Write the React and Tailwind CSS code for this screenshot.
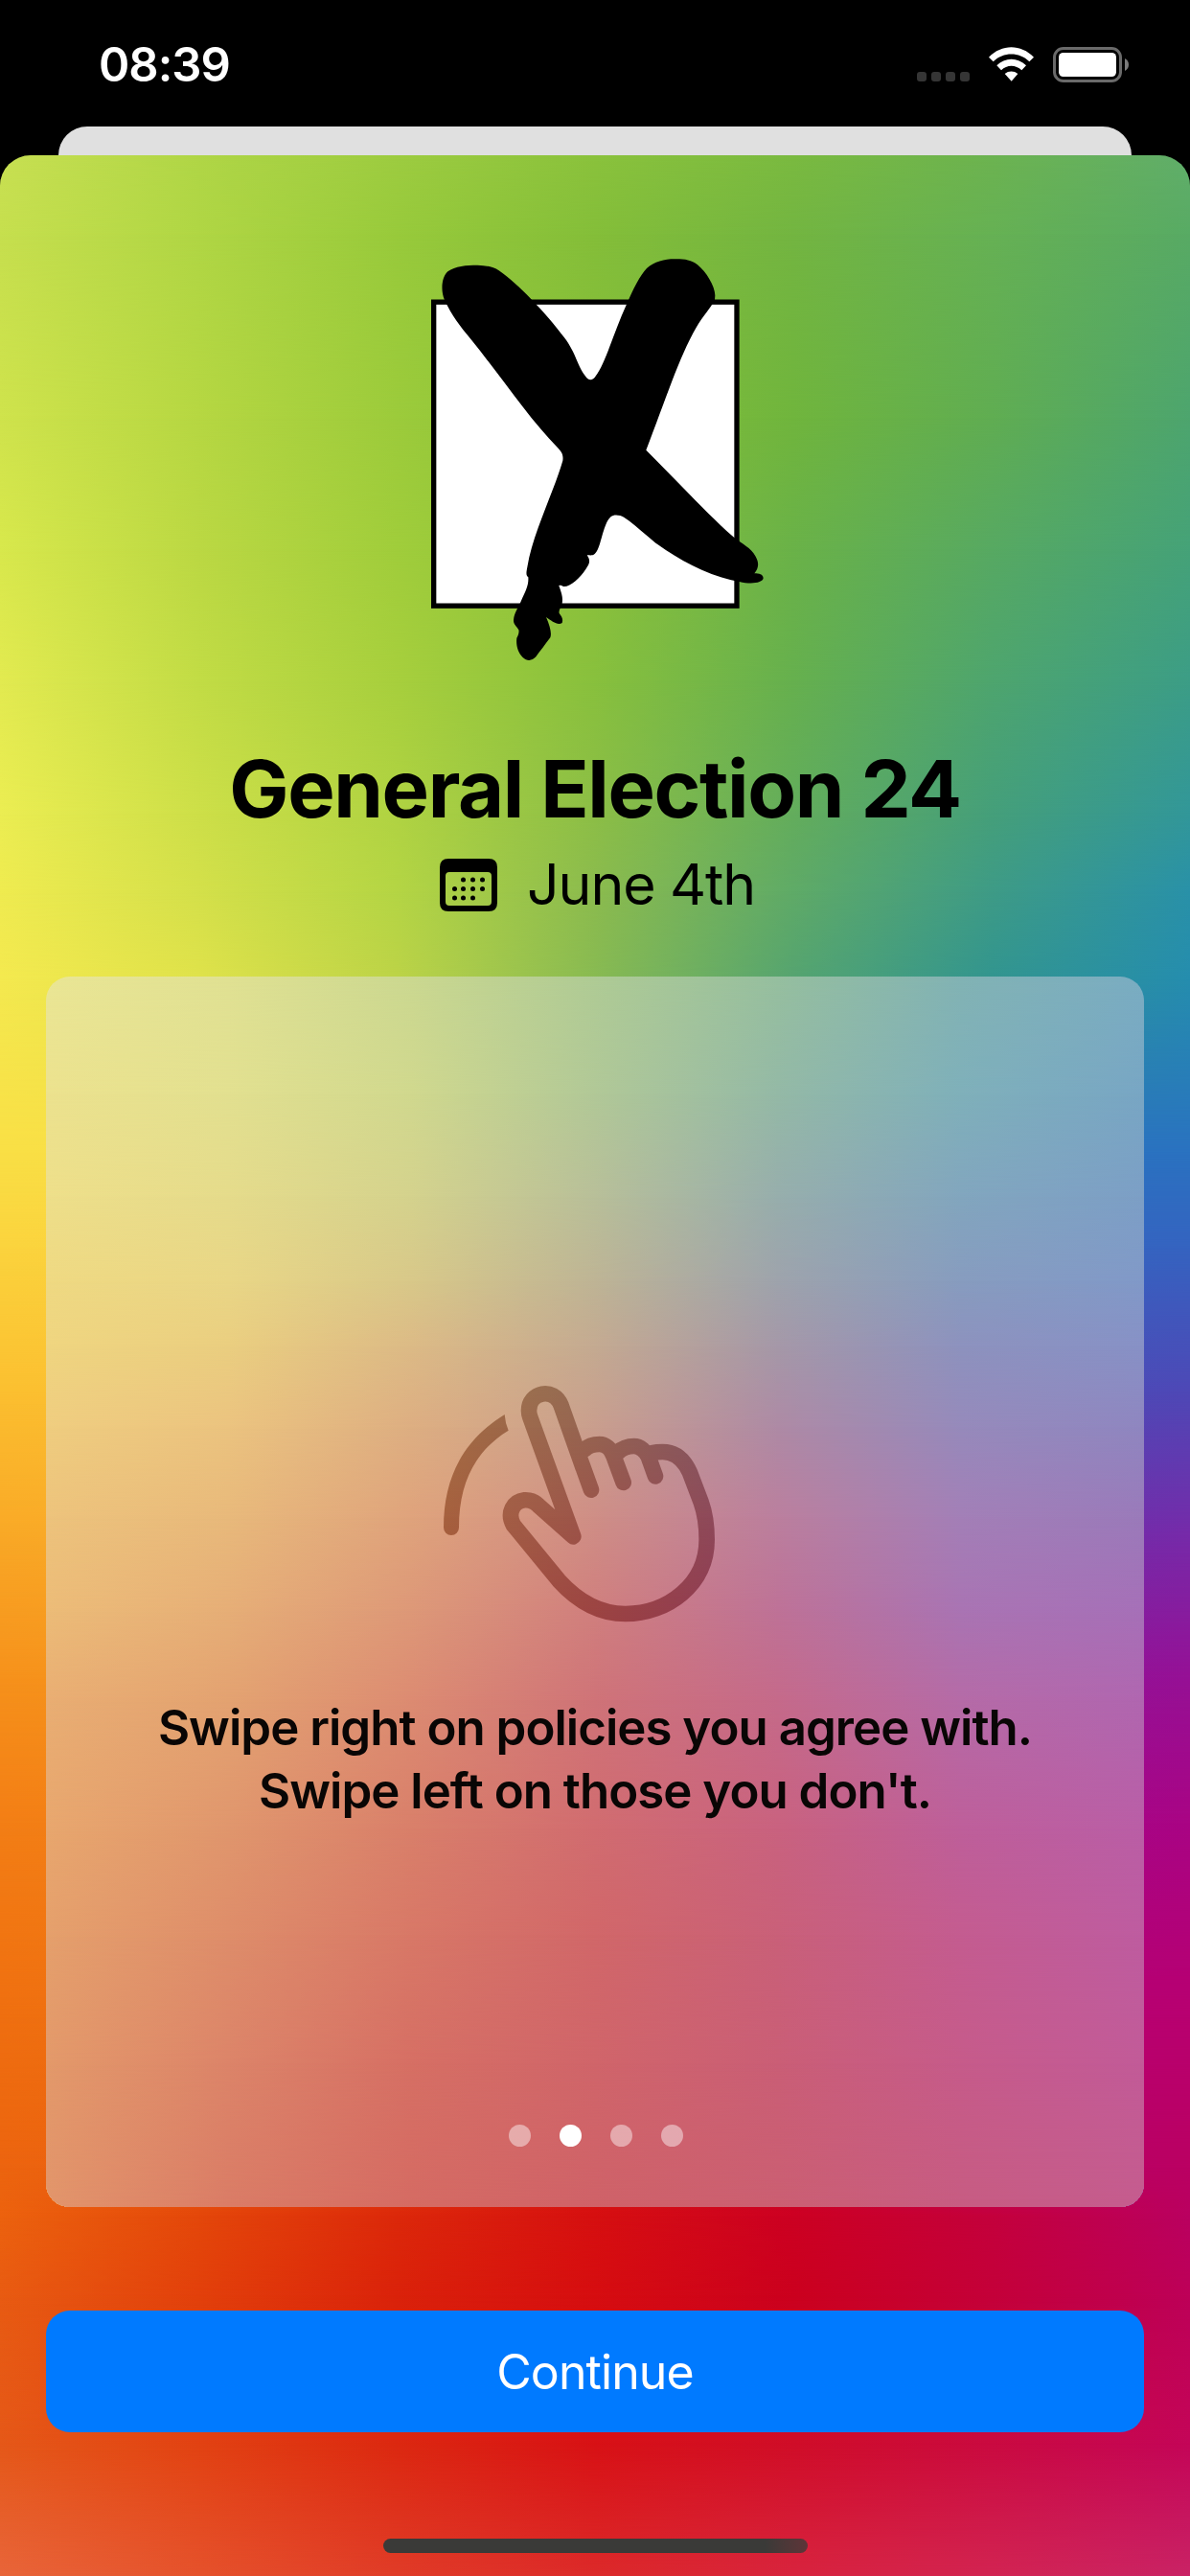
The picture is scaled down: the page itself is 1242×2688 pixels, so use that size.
const SHEET_ROWS = [
  { y: 0, colors: ["#c8e052", "#b0d646", "#9dcc40", "#8ac23c", "#7aba40", "#6cb350", "#60ae6a"] },
  { y: 82, colors: ["#c6df4e", "#b0d644", "#98ca3b", "#84be39", "#73b541", "#66b154", "#58aa64"] },
  { y: 274, colors: ["#cfe34c", "#b6d742", "#9ccb3b", "#86bf39", "#70b53d", "#60ad52", "#4da56e"] },
  { y: 411, colors: ["#d8e84c", "#bbd843", "#a0cd3b", "#8ac03b", "#6ab248", "#57a962", "#45a278"] },
  { y: 548, colors: ["#e2ea50", "#c2dc45", "#a7cf3d", "#88c03d", "#66b04e", "#4ea56e", "#3c9d86"] },
  { y: 686, colors: ["#ebed52", "#cddf48", "#b0d342", "#8cbe46", "#63ad5c", "#459f7a", "#329799"] },
  { y: 768, colors: ["#efeb50", "#d4e04a", "#b4d544", "#8bbb4e", "#5faa67", "#3e9b86", "#2991a8"] },
  { y: 860, colors: ["#f4e94f", "#dfe24a", "#bcd347", "#88ba52", "#55a470", "#32958f", "#258dae"] },
  { y: 1040, colors: ["#f9df45", "#f8df46", "#e0c040", "#a0a060", "#5080a0", "#2a72c0", "#2a72c0"] },
  { y: 1140, colors: ["#fbd33d", "#fad43e", "#e0b040", "#a08060", "#6070a0", "#3565c0", "#3563c0"] },
  { y: 1290, colors: ["#fbbf30", "#fbc032", "#e0a040", "#b06060", "#7050a0", "#4c4cb8", "#4e48b6"] },
  { y: 1440, colors: ["#f9a826", "#f9ac28", "#e08030", "#c04050", "#9040a0", "#722caa", "#762aa9"] },
  { y: 1590, colors: ["#f6911b", "#f6941c", "#e06020", "#d03030", "#b02080", "#931298", "#961095"] },
  { y: 1740, colors: ["#f37e15", "#f38016", "#e05018", "#d02020", "#c01060", "#a60688", "#a90484"] },
  { y: 1940, colors: ["#ef6f10", "#f07210", "#e04010", "#d01818", "#c80840", "#b80070", "#b80070"] },
  { y: 2100, colors: ["#ec640f", "#ea5e0e", "#e24010", "#d61412", "#cb0028", "#ba0064", "#ba0062"] },
  { y: 2150, colors: ["#ec620e", "#e4470a", "#dc280a", "#d60f10", "#cc0022", "#c4003c", "#ba0060"] },
  { y: 2233, colors: ["#e85b12", "#e2400b", "#da220a", "#d60d10", "#cb001e", "#c40039", "#bd0058"] },
  { y: 2387, colors: ["#e55818", "#e24212", "#dc2810", "#d81115", "#d00d28", "#ca0a40", "#c40558"] },
  { y: 2526, colors: ["#e8653a", "#e5522c", "#e03c28", "#dc2a2a", "#d8243e", "#d22452", "#c92365"] },
];

const CARD_ROWS = [
  { y: 0, colors: ["#eae695", "#e0e193", "#cbd890", "#afcb95", "#96bf9f", "#82b3b4", "#7aadc2"] },
  { y: 122, colors: ["#ece28e", "#e2e090", "#d0d88e", "#b1c897", "#94b9a6", "#7fb0ba", "#78a6c4"] },
  { y: 229, colors: ["#eedf8a", "#e5db8b", "#d4d28d", "#b8bf99", "#97aeac", "#82a6be", "#7c9fc6"] },
  { y: 318, colors: ["#efd982", "#e9d686", "#d8c889", "#beb495", "#9ea3ac", "#879cbf", "#8199c8"] },
  { y: 385, colors: ["#efd580", "#eace80", "#dcba86", "#c4aa91", "#a598a8", "#8d92be", "#8791c6"] },
  { y: 470, colors: ["#efcd7f", "#ebc37f", "#ddae82", "#c99e8d", "#ae8aa5", "#968abb", "#8f86c0"] },
  { y: 564, colors: ["#edc37c", "#e8b97b", "#dfa37c", "#cf8e86", "#bb7f9e", "#a37fb7", "#9a7aba"] },
  { y: 661, colors: ["#ecbc78", "#e6ae77", "#dd9878", "#d07f7e", "#be7297", "#a974b3", "#a670b8"] },
  { y: 755, colors: ["#e9ae73", "#e3a271", "#dc8b72", "#cf7378", "#c56a8a", "#b56ba7", "#b066b0"] },
  { y: 889, colors: ["#e8a76e", "#e0966d", "#d97f6a", "#d16c70", "#c9627f", "#be5f9a", "#ba5ea6"] },
  { y: 1000, colors: ["#e5a06c", "#de8d6a", "#d87867", "#d16769", "#c96079", "#c45c90", "#be5ca0"] },
  { y: 1134, colors: ["#e3996a", "#dc8469", "#d66f64", "#d0656a", "#ca5e76", "#c65b8a", "#c25b98"] },
  { y: 1284, colors: ["#e2956b", "#da7c66", "#d56b63", "#cf6268", "#cb5f72", "#c75c82", "#c55c8e"] },
];

// Bilinear colour mesh: each row is a horizontal gradient that fades in over the row above it.
function Mesh({ rows }) {
  return (
    <div className="absolute inset-0 -z-10" aria-hidden="true">
      {rows.map((row, i) => (
        <div
          key={row.y}
          className="absolute inset-0"
          style={{
            backgroundImage: `linear-gradient(to right, ${row.colors.join(", ")})`,
            maskImage: i
              ? `linear-gradient(to bottom, transparent ${rows[i - 1].y}px, black ${row.y}px)`
              : undefined,
          }}
        />
      ))}
    </div>
  );
}

function StatusBar() {
  return (
    <div className="flex h-[132px] items-start justify-between pl-[103px] pr-[64px] pt-[38px]">
      <span className="text-[49px] font-semibold leading-[60px] tracking-[-1px] text-white">08:39</span>
      <div className="flex pt-[11px]">
        <div className="mr-5 flex gap-[5px] pt-[26px]">
          {[0, 1, 2, 3].map((i) => (
            <span key={i} className="size-[10px] rounded-[3px] bg-[#353535]" />
          ))}
        </div>
        <svg className="mr-5 h-[36px] w-[47px]" viewBox="0 0 141 108" fill="#fff">
          <path d="M0 32C40 -10 101 -10 141 32L127 46C95 15 46 15 14 46Z" />
          <path d="M25 58C50 32 91 32 117 58L103 73C84 55 57 55 39 73Z" />
          <path d="M50 84C62 74 79 74 91 84L71 107Z" />
        </svg>
        <svg className="h-[37px] w-[79px]" viewBox="0 0 237 111">
          <rect x="4.5" y="4.5" width="207" height="102" rx="28" fill="none" stroke="#6a6a6a" strokeWidth="9" />
          <rect x="18" y="18" width="180" height="75" rx="14" fill="#fff" />
          <path d="M225 36Q237 43 237 55.500Q237 68 225 75Z" fill="#7b7b7b" />
        </svg>
      </div>
    </div>
  );
}

function BallotLogo() {
  return (
    <svg className="h-[470px] w-[400px] shrink-0" viewBox="0 0 1200 1410">
      <rect x="98" y="225.500" width="949" height="951" fill="#fff" stroke="#000" strokeWidth="16" />
      <path d="M131 217C120 190 122 148 142 130C165 113 200 110 235 110C262 111 285 115 302 127C335 150 370 182 402 215C440 254 480 300 507 337C545 388 545 420 572 456Q589 482 606 456C635 420 660 325 701 235C720 190 745 140 765 120C790 97 825 90 858 91C885 91 905 94 924 109C952 132 978 175 979 205L978 218C965 245 940 270 920 305C865 400 825 530 763 689C850 775 960 895 1040 964C1065 984 1090 994 1106 1022C1117 1042 1116 1058 1102 1075C1117 1075 1129 1077 1130 1090C1128 1105 1092 1110 1055 1101C960 1085 870 1035 800 985C760 955 710 904 682 894C660 889 650 895 640 915C624 948 619 1000 602 1014C594 1021 584 1017 578 1018C590 1035 586 1045 574 1062C555 1091 525 1118 504 1116C498 1113 492 1111 490 1114C502 1145 502 1155 500 1170C494 1185 489 1192 491 1200C498 1209 504 1217 500 1230C486 1239 468 1224 450 1212C462 1240 468 1262 463 1276C447 1297 430 1320 418 1336C405 1350 390 1350 377 1338C362 1322 355 1300 358 1277C363 1269 366 1258 364 1252C358 1240 347 1236 348 1220C350 1197 365 1178 372 1160C385 1132 396 1112 394 1087C386 1083 388 1070 391 1055C408 950 470 830 502 722C505 700 496 692 485 680C400 595 310 460 215 343C180 300 155 270 131 217Z" />
    </svg>
  );
}

function CalendarIcon() {
  const dots = [
    [24.500, 22], [34.500, 22], [44.500, 22],
    [15.500, 31.500], [24.500, 31.500], [34.500, 31.500], [44.500, 31.500],
    [15.500, 41], [24.500, 41], [34.500, 41],
  ];
  return (
    <svg className="h-[55px] w-[60px]" viewBox="0 0 60 55">
      <path
        fillRule="evenodd"
        d="M9 0H51Q60 0 60 9V46Q60 55 51 55H9Q0 55 0 46V9Q0 0 9 0ZM10 14Q6 14 6 18V45Q6 49 10 49H50Q54 49 54 45V18Q54 14 50 14Z"
      />
      {dots.map(([x, y]) => (
        <circle key={`${x}-${y}`} cx={x} cy={y} r="2.500" />
      ))}
    </svg>
  );
}

function SwipeIcon() {
  return (
    <svg className="h-[310px] w-[350px] mix-blend-difference" viewBox="0 0 1050 930">
      <path
        fill="#363f40"
        d="M99 552C99 390 165 275 290 198Q292 225 302 248C200 310 147 410 147 552A24 24 0 0 1 99 552Z"
      />
      <path
        fill="none"
        stroke="#343b3c"
        strokeWidth="50"
        strokeLinejoin="round"
        strokeLinecap="round"
        d="M536 365L467 170C443 110 366 128 366 186Q366 196 370 207L505 580L395 482C378 463 352 466 352 466C318 470 296 505 318 545L324 552L460 718C530 795 600 822 668 822C800 822 923 730 923 590C923 530 915 500 905 472L870 380C850 335 822 315 785 315Q765 315 752 318M645 316Q665 297 695 297C715 297 733 315 740 330L762 391M540 308C555 293 570 291 587 291C605 291 623 305 632 330L662 411M530 348L561 434"
      />
    </svg>
  );
}

export default function App() {
  return (
    <div className="flex h-[2688px] w-[1242px] flex-col overflow-hidden bg-black font-['Inter',sans-serif] text-black">
      <StatusBar />
      <div className="mx-[61px] h-[30px] shrink-0 rounded-t-[30px] bg-[#e0e0e0]" />
      <main className="relative isolate flex h-[2526px] shrink-0 flex-col items-center overflow-hidden rounded-t-[32px] px-12 pt-[78px]">
        <Mesh rows={SHEET_ROWS} />
        <div className="flex w-full pl-[372px]">
          <BallotLogo />
        </div>
        <h1 className="mt-[63px] whitespace-nowrap text-[83px] font-bold leading-[100px] tracking-[-1.35px]">General Election 24</h1>
        <div className="mt-[12px] flex h-[76px] items-center gap-[31px] pl-[5px]">
          <CalendarIcon />
          <span className="text-[59px] leading-[76px] tracking-[-1.1px]">June 4th</span>
        </div>
        <section className="relative isolate mt-[58px] flex h-[1284px] w-full shrink-0 flex-col items-center overflow-hidden rounded-[25px]">
          <Mesh rows={CARD_ROWS} />
          <div className="mr-[32px] mt-[391px]">
            <SwipeIcon />
          </div>
          <p className="mt-[50px] whitespace-nowrap text-center text-[51px] font-semibold leading-[66px] tracking-[-0.98px] text-[#090605]">
            Swipe right on policies you agree with.
            <br />
            Swipe left on those you don't.
          </p>
          <div className="mt-[315px] flex gap-[30px] pl-px">
            {[0, 1, 2, 3].map((i) => (
              <span key={i} className={i === 1 ? "size-[23px] rounded-full bg-white" : "size-[23px] rounded-full bg-white/45"} />
            ))}
          </div>
        </section>
        <button className="mt-[108px] h-[127px] w-full shrink-0 rounded-[25px] bg-[#007aff] text-[50px] leading-[60px] tracking-[-0.9px] text-white">
          Continue
        </button>
        <div className="mt-[111px] h-[15px] w-[443px] shrink-0 rounded-full bg-linear-to-r from-[#3a3a38] from-90% to-[#5e3438]" />
      </main>
    </div>
  );
}
